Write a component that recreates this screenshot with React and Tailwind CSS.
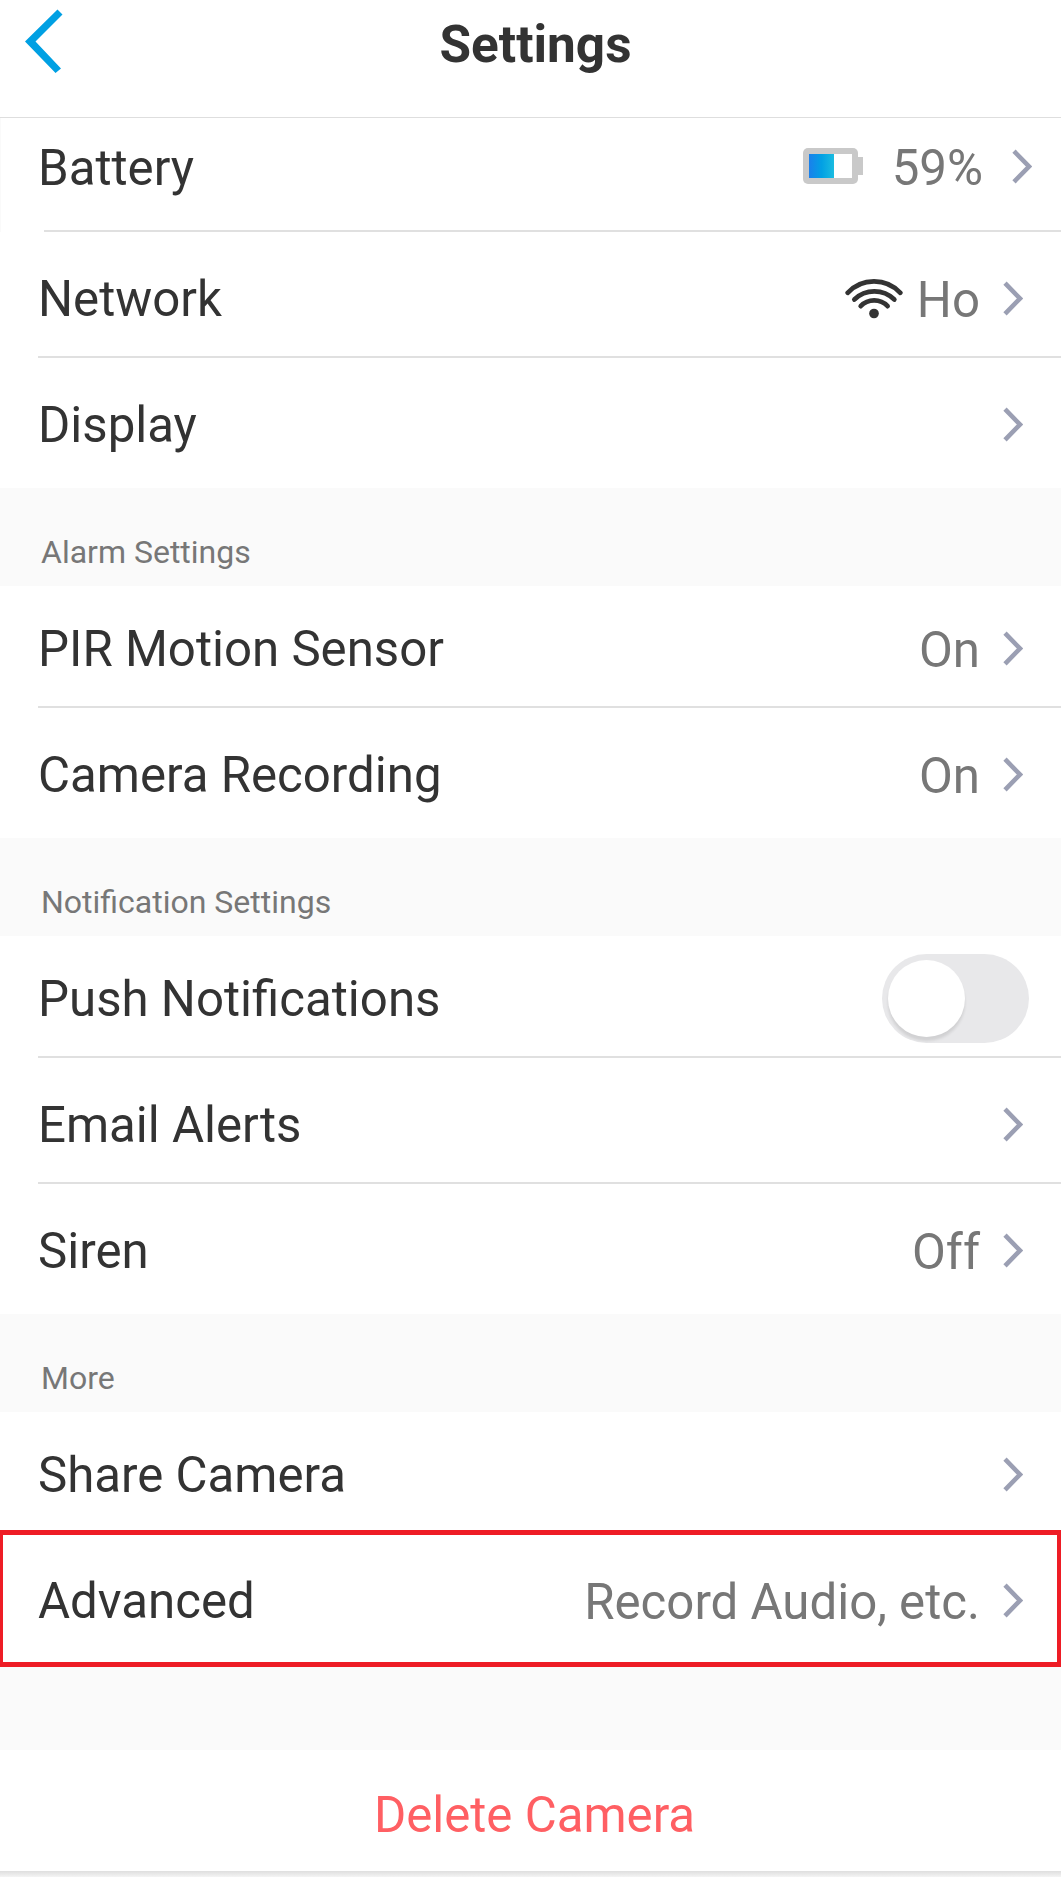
function Chevron({ className = 'mr-[38px]' }) {
  return (
    <svg viewBox="0 0 20 35" className={`w-5 h-[35px] shrink-0 ${className}`} fill="none">
      <path d="M2 2.2 L17 17.5 L2 32.8" stroke="#9b9fb3" strokeWidth="4.6" />
    </svg>
  );
}

function BatteryIcon() {
  return (
    <svg viewBox="0 0 60 36" className="w-[60px] h-9 shrink-0">
      <defs>
        <linearGradient id="charge" x1="0" x2="1" y1="0" y2="0">
          <stop offset="0" stopColor="#1a80ec" />
          <stop offset="0.5" stopColor="#02a0e4" />
          <stop offset="1" stopColor="#1abce0" />
        </linearGradient>
      </defs>
      <rect width="55" height="36" rx="5" fill="#c9c9c9" />
      <rect x="54" y="9" width="6" height="18" fill="#c9c9c9" />
      <rect x="6" y="6" width="43" height="24" fill="#fff" />
      <rect x="6" y="6" width="25" height="24" fill="url(#charge)" />
    </svg>
  );
}

function WifiIcon() {
  return (
    <svg viewBox="0 0 174 122" className="w-[58px] h-[41px] shrink-0" fill="none" stroke="#333" strokeWidth="14" strokeLinecap="round">
      <path d="M8 44 A108 108 0 0 1 166 44" />
      <path d="M28 64 A86 86 0 0 1 148 64" />
      <path d="M47 84 A56 56 0 0 1 128 84" />
      <circle cx="87" cy="106" r="14.5" fill="#333" stroke="none" />
    </svg>
  );
}

function Toggle() {
  return (
    <div className="w-[147px] h-[89px] mr-8 p-1.5 rounded-full bg-[#e8e8ea] shrink-0">
      <div className="w-[77px] h-[77px] rounded-full bg-white shadow-[0_4px_3px_rgba(0,0,0,0.1)]" />
    </div>
  );
}

function Row({ label, value, icon, control, className = 'pt-9 pb-7 border-b-2' }) {
  return (
    <div className={`ml-[38px] border-[#e0e0e0] ${className}`}>
      <div className="flex items-center h-[60px]">
        <span className="flex-1 pt-0.5 text-[#333]">{label}</span>
        {icon}
        {value && <span className="pt-1 mr-[23px] text-[#777]">{value}</span>}
        {control || <Chevron />}
      </div>
    </div>
  );
}

function SectionTitle({ children }) {
  return (
    <div className="h-[98px] bg-[#fafafa] pl-[41px] pt-[44px] text-[32px] leading-10 text-[#777]">
      {children}
    </div>
  );
}

function App() {
  return (
    <div className="w-[1061px] h-[1877px] overflow-hidden bg-white font-[Roboto,sans-serif] text-[49.2px] leading-[60px]">
      <header className="flex items-start h-[118px] border-b border-[#dedede]">
        <svg viewBox="0 0 38 64" className="w-[38px] h-16 mt-[9px] ml-[25px]">
          <path d="M32.5 0.5 L37.5 5.5 L10.5 32.5 L36 59.5 L30.5 64 L0 32.5 Z" fill="#00a0e3" />
        </svg>
        <h1 className="flex-1 mt-[15px] mr-[53px] text-center text-[51.3px] font-bold text-[#333]">Settings</h1>
      </header>

      <div className="h-[114px] pt-[18px] border-l border-[#fafafa]">
        <div className="flex items-center h-[60px] pl-[37px]">
          <span className="flex-1 pt-1 text-[#333]">Battery</span>
          <BatteryIcon />
          <span className="pt-1 ml-[29px] mr-[29px] text-[#777]">59%</span>
          <Chevron className="mr-[29px]" />
        </div>
        <div className="mt-[34px] ml-[43px] h-0.5 bg-[#e0e0e0]" />
      </div>
      <Row label="Network" icon={<div className="mr-3.5"><WifiIcon /></div>} value="Ho" />
      <Row label="Display" className="pt-9 pb-[34px]" />

      <SectionTitle>Alarm Settings</SectionTitle>
      <Row label="PIR Motion Sensor" value="On" className="pt-8 pb-7 border-b-2" />
      <Row label="Camera Recording" value="On" className="pt-9 pb-[34px]" />

      <SectionTitle>Notification Settings</SectionTitle>
      <Row label="Push Notifications" control={<Toggle />} className="pt-8 pb-7 border-b-2" />
      <Row label="Email Alerts" />
      <Row label="Siren" value="Off" className="pt-9 pb-[34px]" />

      <SectionTitle>More</SectionTitle>
      <Row label="Share Camera" className="pt-8 pb-[26px]" />
      <div className="border-y-5 border-l-3 border-r-4 border-[#ee1c25]">
        <div className="-ml-[3px] -mr-1">
          <Row label="Advanced" value="Record Audio, etc." className="pt-[35px] pb-8" />
        </div>
      </div>

      <div className="h-[83px] bg-[#fafafa]" />
      <button className="block w-full h-[121px] pt-2 pl-2 text-center text-[#ff5f63]">Delete Camera</button>
      <div className="h-1.5 bg-linear-to-b from-[#dedede] to-[#f4f4f4]" />
    </div>
  );
}

export default App;
